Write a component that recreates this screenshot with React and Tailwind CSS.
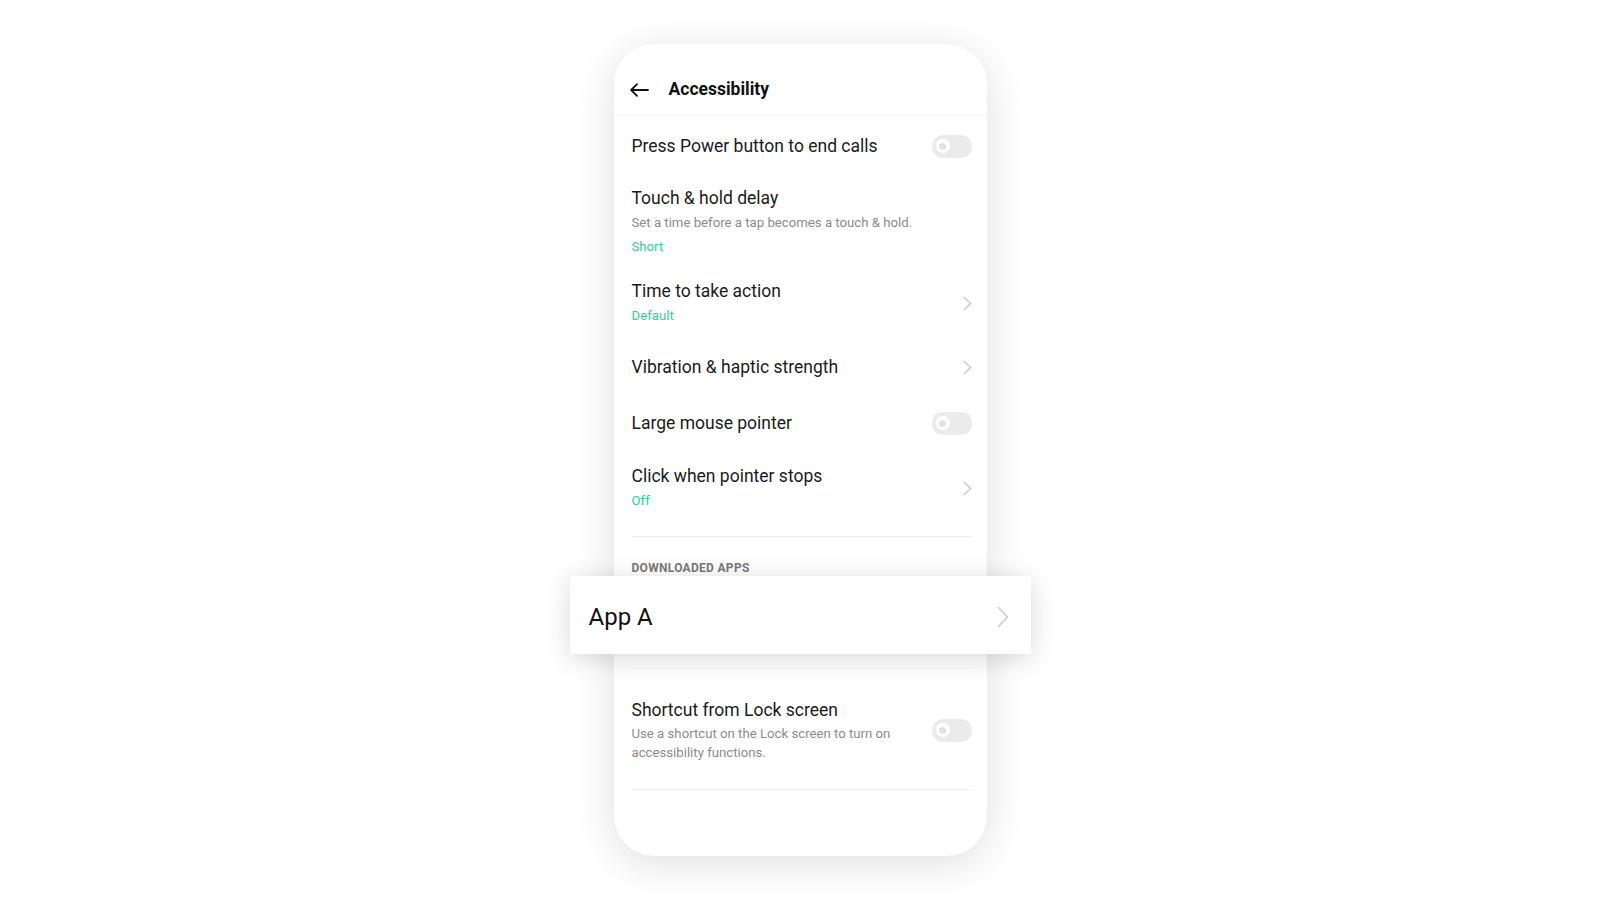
const FONT = { fontFamily: "Roboto, 'Noto Sans', sans-serif" };

function Toggle() {
    return (
        <div className="w-[40px] h-[23px] rounded-full bg-[#ebebeb] flex items-center pl-[4px] shrink-0">
            <div className="w-[14px] h-[14px] rounded-full bg-white flex items-center justify-center">
                <div className="w-[7px] h-[7px] rounded-full bg-[#e2e2e2]" />
            </div>
        </div>
    );
}

function Chevron({ big }) {
    return big ? (
        <svg width="12" height="22" viewBox="0 0 12 22" fill="none" className="shrink-0">
            <path d="M1.5 1.5 L10.5 11 L1.5 20.5" stroke="#cdcdcd" strokeWidth="1.6" strokeLinecap="round" strokeLinejoin="round" />
        </svg>
    ) : (
        <svg width="9" height="15" viewBox="0 0 9 15" fill="none" className="shrink-0">
            <path d="M1.2 1.2 L7.6 7.5 L1.2 13.8" stroke="#c8c8c8" strokeWidth="1.4" strokeLinecap="round" strokeLinejoin="round" />
        </svg>
    );
}

function Row({ height, title, sub, value, right }) {
    return (
        <div className={`flex items-center justify-between ${height}`}>
            <div className="flex flex-col">
                <div className="text-[17.5px] leading-[24px] text-[#1b1b1b]">{title}</div>
                {sub && <div className="mt-[2px] text-[13.2px] leading-[22px] text-[#8c8c8c]">{sub}</div>}
                {value && <div className="mt-[2px] text-[13.2px] leading-[22px] text-[#30cf96]">{value}</div>}
            </div>
            {right === "toggle" && <Toggle />}
            {right === "chevron" && <Chevron />}
        </div>
    );
}

export default function App() {
    return (
        <div className="min-h-[900px] w-full bg-white flex justify-center pt-[44px]" style={FONT}>
            <div className="w-[373px] h-[812px] bg-white rounded-[40px] shadow-[0_8px_40px_rgba(0,0,0,0.13)] flex flex-col">
                {/* Header */}
                <div className="h-[72px] pt-[20px] flex items-center pl-[16px] border-b border-[#f7f7f7]">
                    <svg width="19" height="14" viewBox="0 0 19 14" fill="none">
                        <path d="M18 7 H1.5 M7 1.2 L1.2 7 L7 12.8" stroke="#111" strokeWidth="1.8" strokeLinecap="round" strokeLinejoin="round" />
                    </svg>
                    <span className="ml-[20px] text-[17.5px] font-bold text-[#111]">Accessibility</span>
                </div>

                <div className="pl-[18px] pr-[15px] flex flex-col">
                    <Row height="h-[60px]" title="Press Power button to end calls" right="toggle" />
                    <Row
                        height="h-[92px]"
                        title="Touch & hold delay"
                        sub="Set a time before a tap becomes a touch & hold."
                        value="Short"
                    />
                    <Row height="h-[70px]" title="Time to take action" value="Default" right="chevron" />
                    <Row height="h-[58px]" title="Vibration & haptic strength" right="chevron" />
                    <Row height="h-[54px]" title="Large mouse pointer" right="toggle" />
                    <Row height="h-[76px]" title="Click when pointer stops" value="Off" right="chevron" />

                    <div className="mt-[10px] border-t border-[#ececec]" />
                    <div className="pt-[23px] text-[12px] leading-[16px] font-bold tracking-[0.3px] text-[#7a7a7a]">
                        DOWNLOADED APPS
                    </div>

                    {/* Highlighted app row */}
                    <div className="-ml-[62px] -mr-[59px] h-[78px] bg-white shadow-[0_4px_26px_rgba(0,0,0,0.16)] flex items-center justify-between pt-[4px] pl-[19px] pr-[22px]">
                        <span className="text-[24px] text-[#111]">App A</span>
                        <Chevron big />
                    </div>

                    <div className="mt-[14px] border-t border-[#ececec]" />

                    <div className="pt-[29px] flex items-center justify-between">
                        <div className="flex flex-col">
                            <div className="text-[17.5px] leading-[24px] text-[#1b1b1b]">Shortcut from Lock screen</div>
                            <div className="mt-[2px] text-[13.2px] leading-[19px] text-[#8c8c8c] w-[270px]">
                                Use a shortcut on the Lock screen to turn on accessibility functions.
                            </div>
                        </div>
                        <Toggle />
                    </div>

                    <div className="mt-[27px] border-t border-[#ececec]" />
                </div>
            </div>
        </div>
    );
}
